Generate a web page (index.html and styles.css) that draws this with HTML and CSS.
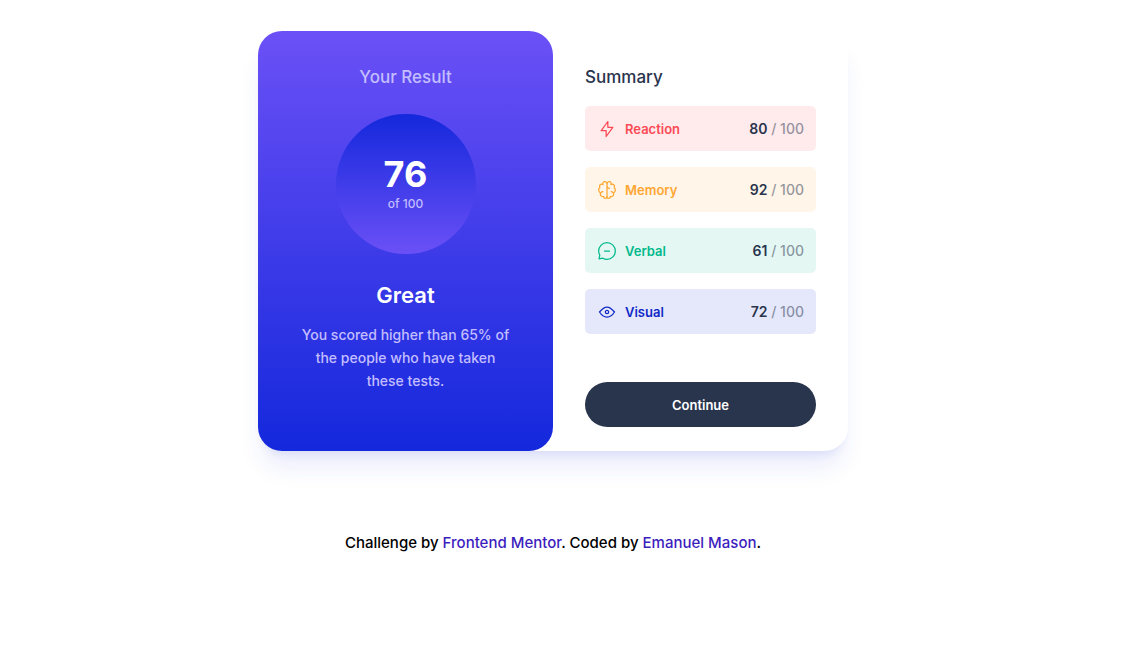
FILE: index.html
```html
<!DOCTYPE html>
<html lang="en">
<head>
  <meta charset="utf-8">
  <meta name="viewport" content="width=device-width, initial-scale=1">
  <title>Results summary</title>
  <link rel="stylesheet" href="styles.css">
</head>
<body>
  <main class="card">
    <section class="result">
      <h1 class="result-title">Your Result</h1>
      <div class="score">
        <strong class="score-value">76</strong>
        <span class="score-max">of 100</span>
      </div>
      <h2 class="grade">Great</h2>
      <p class="result-text">You scored higher than 65% of the people who have taken these tests.</p>
    </section>
    <section class="summary">
      <h2 class="summary-title">Summary</h2>
      <ul class="stats">
        <li class="stat reaction">
          <svg class="icon" viewBox="0 0 20 20" aria-hidden="true"><path d="M10.833 8.333V2.5l-6.666 9.167h5V17.5l6.666-9.167h-5Z"/></svg>
          <span class="stat-name">Reaction</span>
          <span class="stat-score"><b class="stat-value">80</b> / 100</span>
        </li>
        <li class="stat memory">
          <svg class="icon" viewBox="0 0 20 20" aria-hidden="true"><path d="M5.833 11.667a2.5 2.5 0 1 0 .834 4.858"/><path d="M3.553 13.004a3.333 3.333 0 0 1-.728-5.53m.025-.067a2.083 2.083 0 0 1 2.983-2.824m.199.054A2.083 2.083 0 1 1 10 3.75v12.917a1.667 1.667 0 0 1-3.333 0M10 5.833a2.5 2.5 0 0 0 2.5 2.5m1.667 3.334a2.5 2.5 0 1 1-.834 4.858"/><path d="M16.447 13.004a3.334 3.334 0 0 0 .728-5.53m-.025-.067a2.083 2.083 0 0 0-2.983-2.824M10 3.75a2.085 2.085 0 0 1 2.538-2.033 2.084 2.084 0 0 1 1.43 2.92m-.635 12.03a1.667 1.667 0 0 1-3.333 0"/></svg>
          <span class="stat-name">Memory</span>
          <span class="stat-score"><b class="stat-value">92</b> / 100</span>
        </li>
        <li class="stat verbal">
          <svg class="icon" viewBox="0 0 20 20" aria-hidden="true"><path d="M7.5 10h5M10 18.333A8.333 8.333 0 1 0 1.667 10c0 1.518.406 2.942 1.115 4.167l-.699 3.75 3.75-.699A8.295 8.295 0 0 0 10 18.333Z"/></svg>
          <span class="stat-name">Verbal</span>
          <span class="stat-score"><b class="stat-value">61</b> / 100</span>
        </li>
        <li class="stat visual">
          <svg class="icon" viewBox="0 0 20 20" aria-hidden="true"><path d="M10 11.667a1.667 1.667 0 1 0 0-3.334 1.667 1.667 0 0 0 0 3.334Z"/><path d="M17.5 10c-1.574 2.492-4.402 5-7.5 5s-5.926-2.508-7.5-5C4.416 7.632 6.66 5 10 5s5.584 2.632 7.5 5Z"/></svg>
          <span class="stat-name">Visual</span>
          <span class="stat-score"><b class="stat-value">72</b> / 100</span>
        </li>
      </ul>
      <button class="continue" type="button">Continue</button>
    </section>
  </main>
  <footer class="attribution">
    Challenge by <a href="#">Frontend Mentor</a>. Coded by <a href="#">Emanuel Mason</a>.
  </footer>
</body>
</html>
```
FILE: styles.css
```css
* {
  box-sizing: border-box;
  margin: 0;
  padding: 0;
}

body {
  display: flex;
  flex-direction: column;
  align-items: center;
  gap: 80px;
  padding: 31px 41px 31px 0;
  background: #fff;
  font-family: Inter, "Liberation Sans", sans-serif;
  font-weight: 500;
}

.card {
  display: grid;
  grid-template-columns: 1fr 1fr;
  width: 100%;
  max-width: 590px;
  border-radius: 24px;
  background: #fff;
  box-shadow: 0 20px 25px -5px rgba(36, 60, 220, 0.1), 0 8px 10px -6px rgba(36, 60, 220, 0.1);
}

.result {
  display: flex;
  flex-direction: column;
  align-items: center;
  padding: 34px 40px 58px;
  border-radius: 24px;
  background: linear-gradient(#6b50f6, #1428dc);
  color: #c3beff;
  text-align: center;
}

.result-title,
.summary-title {
  font-size: 17px;
  font-weight: 500;
  line-height: 24px;
}

.score {
  display: flex;
  flex-direction: column;
  align-items: center;
  justify-content: center;
  width: 140px;
  height: 140px;
  margin: 25px 0;
  border-radius: 50%;
  background: linear-gradient(#1428dc, #6b50f6);
}

.score-value {
  color: #fff;
  font-size: 36px;
  font-weight: 700;
  line-height: 40px;
}

.score-max {
  font-size: 12px;
  line-height: 20px;
}

.grade {
  margin-bottom: 12px;
  color: #fff;
  font-size: 22px;
  font-weight: 600;
  line-height: 32px;
}

.result-text {
  font-size: 14px;
  line-height: 23px;
}

.summary {
  display: flex;
  flex-direction: column;
  padding: 34px 32px 24px;
  color: #29344d;
}

.stats {
  display: grid;
  gap: 16px;
  margin: 17px 0 48px;
  list-style: none;
}

.stat {
  display: flex;
  align-items: center;
  gap: 8px;
  min-height: 45px;
  padding: 0 12px;
  border-radius: 5px;
  font-size: 13px;
}

.icon {
  width: 20px;
  height: 20px;
  fill: none;
  stroke: currentColor;
  stroke-width: 1.25;
  stroke-linecap: round;
  stroke-linejoin: round;
}

.stat-name {
  font-weight: 600;
}

.stat-score {
  margin-left: auto;
  color: rgba(41, 52, 77, 0.5);
  font-size: 14px;
}

.stat-value {
  color: #29344d;
  font-weight: 600;
}

.reaction {
  background: #ffebec;
  color: #fa4a55;
}

.memory {
  background: #fff5e9;
  color: #ffa732;
}

.verbal {
  background: #e4f7f3;
  color: #00b98c;
}

.visual {
  background: #e5e8fa;
  color: #1028c8;
}

.continue {
  height: 45px;
  border: 0;
  border-radius: 23px;
  background: #29344d;
  color: #fff;
  font: inherit;
  font-size: 13px;
  font-weight: 600;
}

.attribution {
  color: #000;
  font-size: 15px;
  line-height: 24px;
}

.attribution a {
  color: #3c1ebe;
  text-decoration: none;
}
```
